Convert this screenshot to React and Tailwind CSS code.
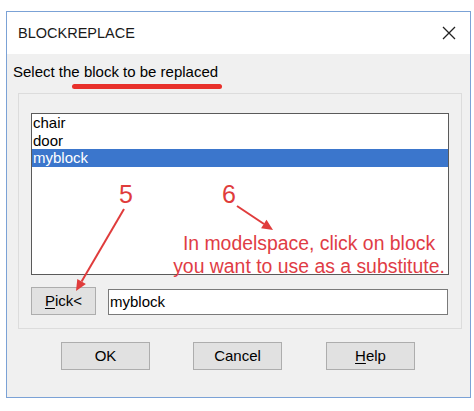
export default function App() {
  const font = { fontFamily: '"Liberation Sans", Arial, sans-serif' };
  return (
    <div className="relative w-[474px] h-[411px] bg-white pt-[11px] pl-[6px]" style={font}>
      <div className="w-[465px] h-[387px] border border-[#7ba2d6] flex flex-col">
        <div className="h-[42px] bg-white flex items-center justify-between pl-[11px] pr-[14px] shrink-0">
          <span className="text-[14.5px] text-[#1a1a1a] leading-none">BLOCKREPLACE</span>
          <svg width="14" height="14" viewBox="0 0 14 14" className="block">
            <path d="M1 1 L13 13 M13 1 L1 13" stroke="#222" strokeWidth="1.3" fill="none" />
          </svg>
        </div>
        <div className="flex-1 bg-[#f0f0f0] flex flex-col">
          <div className="pl-[6px] mt-[9px] text-[15px] leading-[18px] text-black">Select the block to be replaced</div>
          <div className="ml-[11px] mt-[12px] w-[444px] h-[236px] border border-[#dcdcdc] pl-[12px] pt-[19px] flex flex-col">
            <div className="w-[418px] h-[162px] border border-[#5a5a5a] bg-white text-[15px] leading-[17.5px] text-black">
              <div className="pl-[1px]">chair</div>
              <div className="pl-[1px]">door</div>
              <div className="pl-[1px] bg-[#3b76cc] text-white">myblock</div>
            </div>
            <div className="flex mt-[12px] items-start">
              <div className="w-[65px] h-[28px] bg-[#e1e1e1] border border-[#adadad] flex items-center justify-center text-[15px] text-black">
                <span><span className="underline underline-offset-2">P</span>ick&lt;</span>
              </div>
              <div className="ml-[12px] mt-[2px] w-[340px] h-[26px] bg-white border border-[#7a7a7a] flex items-center pl-[1px] text-[15px] text-black">
                myblock
              </div>
            </div>
          </div>
          <div className="flex mt-[13px] pl-[54px]">
            <div className="w-[89px] h-[28px] bg-[#e1e1e1] border border-[#adadad] flex items-center justify-center text-[15px] text-black">OK</div>
            <div className="ml-[43px] w-[89px] h-[28px] bg-[#e1e1e1] border border-[#adadad] flex items-center justify-center text-[15px] text-black">Cancel</div>
            <div className="ml-[44px] w-[89px] h-[28px] bg-[#e1e1e1] border border-[#adadad] flex items-center justify-center text-[15px] text-black">
              <span><span className="underline underline-offset-2">H</span>elp</span>
            </div>
          </div>
        </div>
      </div>

      <div className="absolute left-[72px] top-[84px] w-[150px] h-[5px] rounded-full bg-[#e8302b]" />

      <div className="absolute left-[119px] top-[182px] text-[25px] leading-[25px] text-[#e03c3c]">5</div>
      <div className="absolute left-[222px] top-[182px] text-[25px] leading-[25px] text-[#e03c3c]">6</div>

      <div className="absolute left-[159px] top-[232px] w-[300px] text-center text-[19.4px] leading-[23px] text-[#e03c45] whitespace-nowrap">
        <div>In modelspace, click on block</div>
        <div>you want to use as a substitute.</div>
      </div>

      <svg className="absolute left-0 top-0 pointer-events-none" width="474" height="411" viewBox="0 0 474 411">
        <line x1="237" y1="206" x2="264" y2="224" stroke="#e03c3c" strokeWidth="2" />
        <polygon points="273,230 261.1,228.2 266.5,219.8" fill="#e03c3c" />
        <line x1="124" y1="209" x2="81.6" y2="281.5" stroke="#e03c3c" strokeWidth="2" />
        <polygon points="76,291 77.3,279 85.9,284" fill="#e03c3c" />
      </svg>
    </div>
  );
}
